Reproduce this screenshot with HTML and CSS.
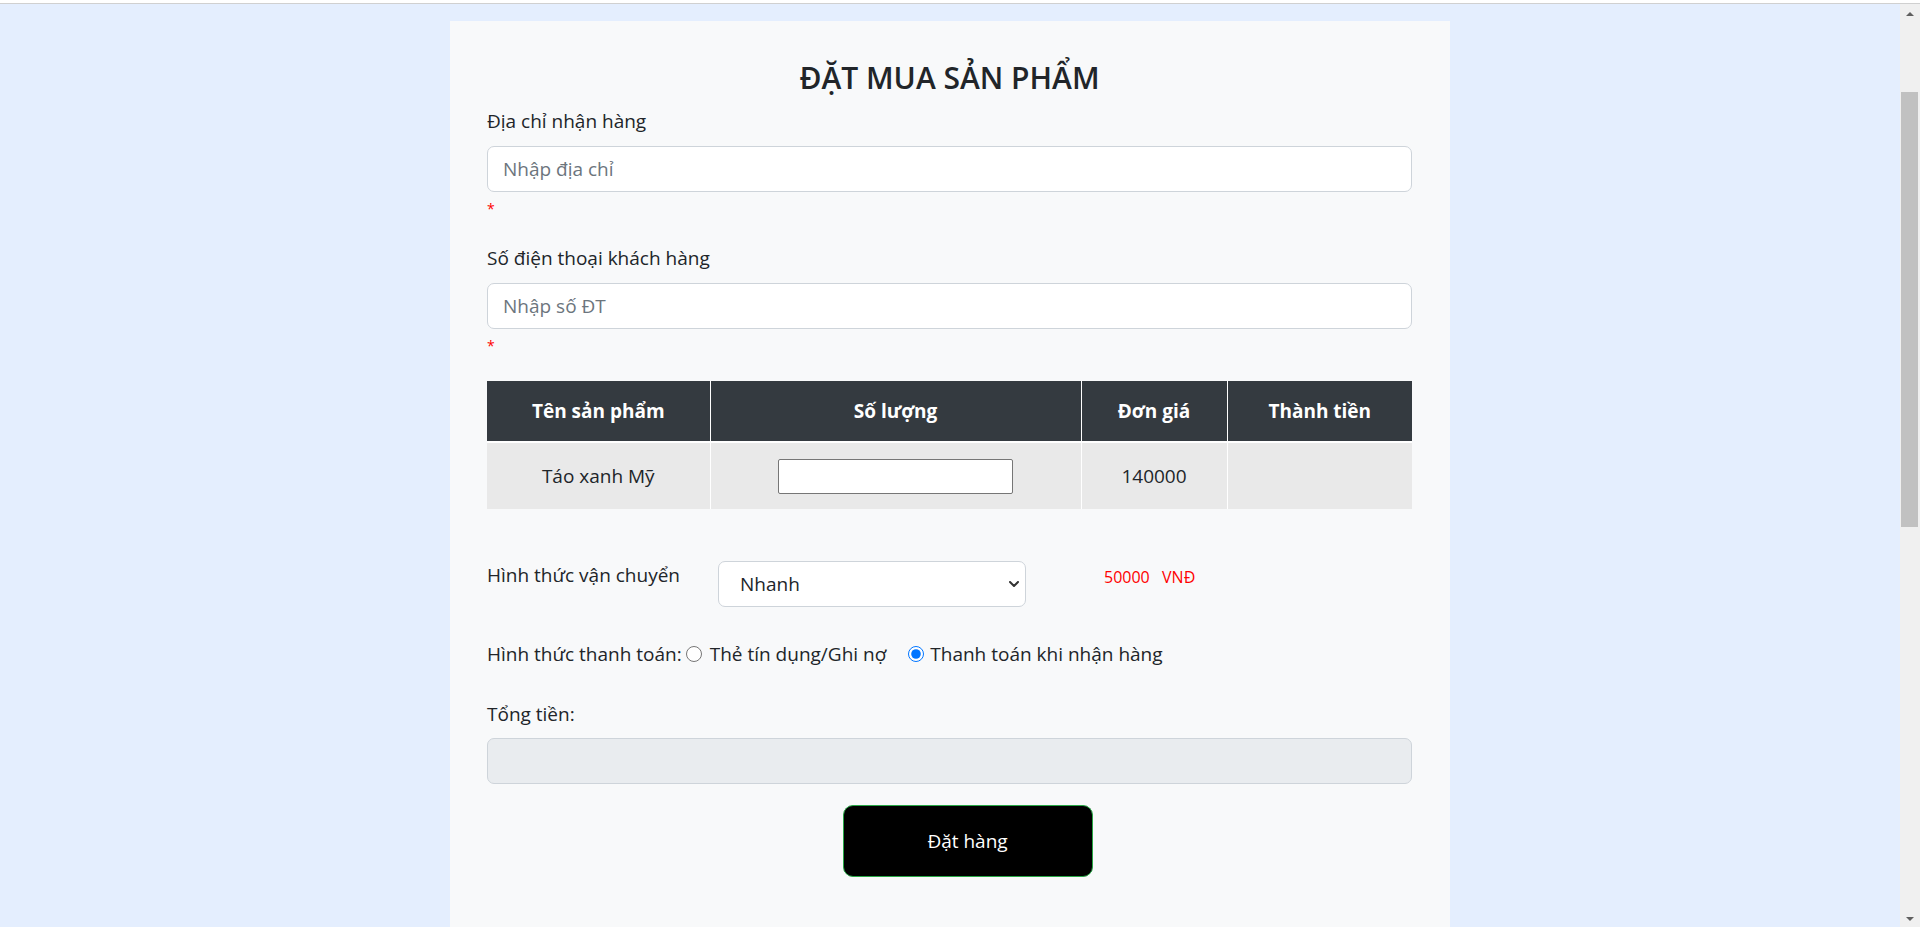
FILE: index.html
```html
<!DOCTYPE html>
<html lang="vi">
<head>
<meta charset="utf-8">
<title>Đặt mua sản phẩm</title>
<link rel="stylesheet" href="styles.css">
</head>
<body>
<div class="chrome-line"></div>
<div class="screen">
  <div class="viewport">
    <main class="page">
      <form class="card">
        <h1 class="title">ĐẶT MUA SẢN PHẨM</h1>

        <div class="group">
          <label class="label" for="addr">Địa chỉ nhận hàng</label>
          <input class="field" id="addr" type="text" placeholder="Nhập địa chỉ">
          <div class="err">*</div>
        </div>

        <div class="group">
          <label class="label" for="phone">Số điện thoại khách hàng</label>
          <input class="field" id="phone" type="text" placeholder="Nhập số ĐT">
          <div class="err">*</div>
        </div>

        <table class="products">
          <colgroup>
            <col class="c-name">
            <col class="c-qty">
            <col class="c-price">
            <col class="c-total">
          </colgroup>
          <thead>
            <tr>
              <th>Tên sản phẩm</th>
              <th>Số lượng</th>
              <th>Đơn giá</th>
              <th>Thành tiền</th>
            </tr>
          </thead>
          <tbody>
            <tr>
              <td>Táo xanh Mỹ</td>
              <td><input class="qty" type="text" aria-label="Số lượng"></td>
              <td>140000</td>
              <td></td>
            </tr>
          </tbody>
        </table>

        <div class="ship-row">
          <label class="ship-label" for="ship">Hình thức vận chuyển</label>
          <div class="select-wrap">
            <select class="select" id="ship">
              <option>Nhanh</option>
              <option>Tiêu chuẩn</option>
            </select>
            <svg class="chev" width="10" height="6" viewBox="0 0 10 6" aria-hidden="true"><path d="M1 1l4 4 4-4" fill="none" stroke="#333333" stroke-width="2" stroke-linecap="round" stroke-linejoin="round"/></svg>
          </div>
          <span class="fee">50000&nbsp;&nbsp;VNĐ</span>
        </div>

        <div class="pay-row">
          <span class="pay-label">Hình thức thanh toán:</span>
          <label class="opt opt-card"><input class="radio" type="radio" name="pay"><span>Thẻ tín dụng/Ghi nợ</span></label>
          <label class="opt opt-cod"><input class="radio" type="radio" name="pay" checked><span>Thanh toán khi nhận hàng</span></label>
        </div>

        <div class="group group-total">
          <label class="label" for="total">Tổng tiền:</label>
          <input class="field field-readonly" id="total" type="text" readonly>
        </div>

        <div class="actions">
          <button class="submit" type="button">Đặt hàng</button>
        </div>
      </form>
    </main>
  </div>
  <div class="scrollbar" aria-hidden="true">
    <span class="sb-arrow sb-up"></span>
    <div class="sb-track"><div class="sb-thumb"></div></div>
    <span class="sb-arrow sb-down"></span>
  </div>
</div>
</body>
</html>
```
FILE: styles.css
```css
html,
body {
  height: 100%;
}

body {
  margin: 0;
  overflow: hidden;
  background: #e4eefe;
  font-family: "Open Sans", "Noto Sans", sans-serif;
  font-size: 19px;
  color: #212529;
}

.chrome-line {
  height: 3px;
  background: #ffffff;
  border-bottom: 1px solid #d0d0d0;
}

.screen {
  display: flex;
  height: calc(100% - 4px);
  overflow: hidden;
}

.viewport {
  flex: 1;
  min-width: 0;
  overflow: hidden;
}

/* scrollbar strip */
.scrollbar {
  width: 20px;
  flex: none;
  background: #f0f0f0;
  display: flex;
  flex-direction: column;
  align-items: center;
}
.sb-arrow {
  flex: none;
  width: 0;
  height: 0;
  border-left: 4.5px solid transparent;
  border-right: 4.5px solid transparent;
}
.sb-up {
  margin: 8px 0 8px;
  border-bottom: 4px solid #606060;
}
.sb-down {
  margin: 8px 0 6px;
  border-top: 4px solid #606060;
}
.sb-track {
  flex: 1;
  align-self: stretch;
  padding: 0 2px 0 1px;
}
.sb-thumb {
  height: 435px;
  margin-top: 68px;
  background: #c1c1c1;
}

.page {
  width: 1000px;
  margin: 17px auto 0;
}

.card {
  background: #f8f9fa;
  padding: 39px 38px 80px 37px;
  display: flex;
  flex-direction: column;
}

.title {
  margin: 0 0 10px;
  text-align: center;
  font-size: 30px;
  font-weight: 600;
  line-height: 36px;
  color: #212529;
}

.group {
  display: flex;
  flex-direction: column;
  margin-bottom: 21px;
}

.label {
  line-height: 30px;
  margin-bottom: 10px;
}

.field {
  height: 46px;
  box-sizing: border-box;
  border: 1px solid #ced4da;
  border-radius: 7px;
  background: #ffffff;
  padding: 0 15px;
  font-family: inherit;
  font-size: 19px;
  color: #212529;
  outline: none;
}
.field::placeholder {
  color: #6c757d;
}
.field-readonly {
  background: #e9ecef;
}

.err {
  height: 30px;
  box-sizing: border-box;
  padding-top: 4px;
  line-height: 26px;
  font-size: 14px;
  color: #ff0000;
}

.products {
  width: 100%;
  margin-top: 1px;
  border-collapse: collapse;
  table-layout: fixed;
}
.c-name { width: 223px; }
.c-qty { width: 371px; }
.c-price { width: 146px; }
.products th {
  height: 60px;
  padding: 0;
  background: #343a40;
  color: #ffffff;
  font-weight: 700;
  text-align: center;
  white-space: nowrap;
  border-left: 1px solid #ffffff;
  border-bottom: 2px solid #ffffff;
}
.products td {
  height: 66px;
  padding: 0;
  background: #e9e9e9;
  text-align: center;
  border-left: 1px solid #ffffff;
}
.products th:first-child,
.products td:first-child {
  border-left: 0;
}

.qty {
  display: block;
  margin: 0 auto;
  width: 235px;
  height: 35px;
  box-sizing: border-box;
  border: 1px solid #767676;
  border-radius: 2px;
  background: #ffffff;
  font-family: inherit;
  font-size: 16px;
}

.ship-row {
  display: grid;
  grid-template-columns: 231px 308px 1fr;
  align-items: start;
  margin-top: 51px;
}
.ship-label {
  line-height: 30px;
}
.select-wrap {
  position: relative;
  margin-top: 1px;
}
.select {
  display: block;
  width: 100%;
  height: 46px;
  box-sizing: border-box;
  appearance: none;
  border: 1px solid #ced4da;
  border-radius: 7px;
  background: #ffffff;
  padding: 0 30px 0 21px;
  font-family: inherit;
  font-size: 19px;
  color: #212529;
}
.chev {
  position: absolute;
  right: 7px;
  top: 20px;
}
.fee {
  padding: 4px 0 0 78px;
  line-height: 26px;
  font-size: 16px;
  word-spacing: 2px;
  color: #ff0000;
}

.pay-row {
  display: flex;
  align-items: center;
  margin-top: 32px;
  line-height: 30px;
}
.opt {
  display: flex;
  align-items: center;
}
.radio {
  width: 16px;
  height: 16px;
  margin: 0 8px 0 4px;
}
.opt-cod .radio {
  margin: 0 6px 0 22px;
}

.group-total {
  margin: 30px 0 0;
}
.group-total .label {
  margin-bottom: 9px;
}

.actions {
  display: flex;
  justify-content: center;
  padding-left: 36px;
  margin-top: 21px;
}
.submit {
  width: 250px;
  height: 72px;
  border: 1px solid #28a745;
  border-radius: 10px;
  background: #000000;
  color: #ffffff;
  font-family: inherit;
  font-size: 19px;
  cursor: pointer;
}
```
